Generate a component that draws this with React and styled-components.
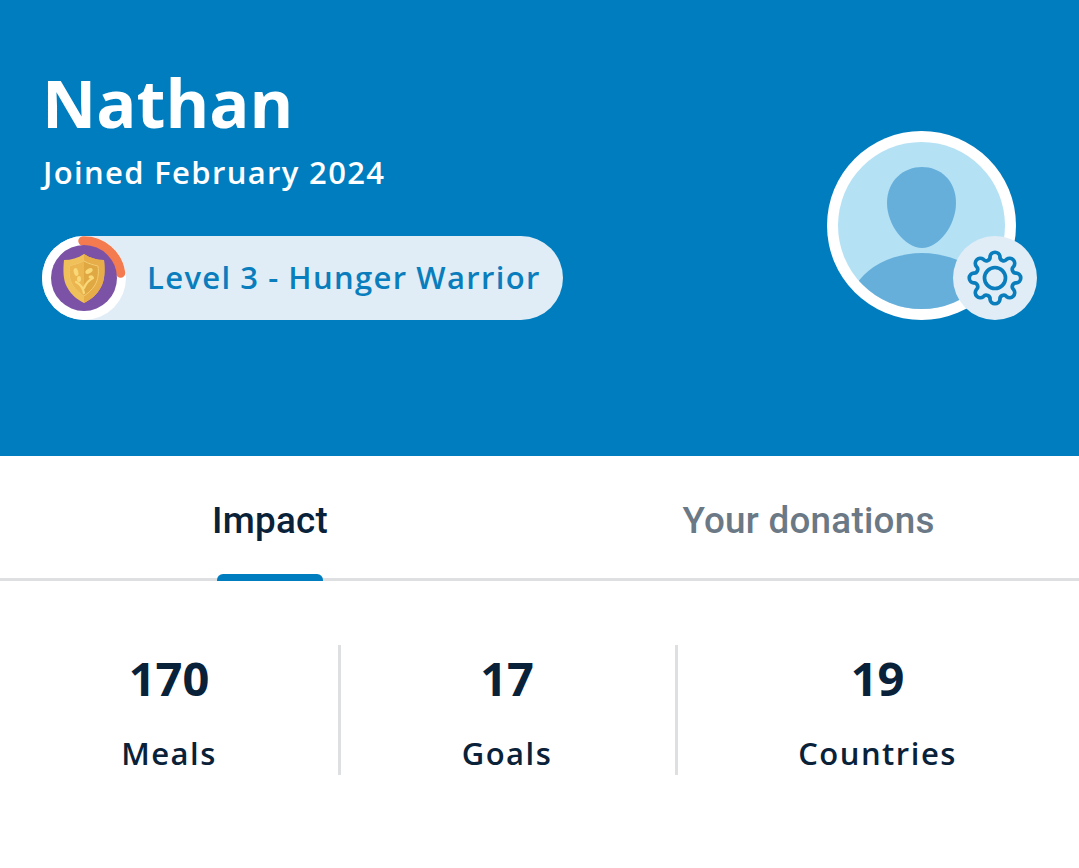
import React from "react";
import styled, { createGlobalStyle } from "styled-components";

const Global = createGlobalStyle`
  html, body { margin: 0; padding: 0; background: #fff; }
  * { box-sizing: border-box; }
`;
const Page = styled.div`
  width: 1079px; height: 868px; overflow: hidden; background: #fff;
  font-family: "Open Sans", sans-serif; color: #0a2239;
`;
const Header = styled.header`
  height: 456px; background: #007dbf; padding: 65px 42px 0 42px;
  display: flex; justify-content: space-between; align-items: flex-start;
`;
const Info = styled.div`display: flex; flex-direction: column; align-items: flex-start;`;
const Name = styled.h1`
  margin: 0; font-size: 66.7px; line-height: 76px; font-weight: 700; color: #fff;
`;
const Joined = styled.div`
  font-size: 31px; line-height: 42px; font-weight: 600; color: #fff; letter-spacing: 1.35px; margin: 10px 0 0 1px;
`;
const Pill = styled.div`
  margin-top: 43px; height: 84px; width: 521px; border-radius: 42px; background: #e0edf6;
  display: flex; align-items: center; gap: 21px;
`;
const Badge = styled.svg`width: 84px; height: 84px; flex: none;`;
const PillText = styled.span`
  font-size: 31px; font-weight: 600; color: #0a7dbd; letter-spacing: 1.35px; word-spacing: -0.6px; white-space: nowrap; margin-bottom: 2px;
`;
const AvatarWrap = styled.div`
  position: relative; width: 189px; height: 189px; margin: 66px 21px 0 0;
`;
const Avatar = styled.svg`width: 189px; height: 189px; display: block;`;
const GearButton = styled.div`
  position: absolute; left: 126px; top: 105px; width: 84px; height: 84px; border-radius: 50%;
  background: #e0edf6; display: flex; align-items: center; justify-content: center; color: #0a7dbd;
`;
const Tabs = styled.nav`
  height: 125px; display: grid; grid-template-columns: 540px 539px; border-bottom: 3px solid #dddfe1;
`;
const Tab = styled.div`
  position: relative; display: flex; justify-content: center; padding: 42px ${(p) => (p.$active ? "0" : "2px")} 0 0;
  font-family: Roboto, sans-serif; font-weight: 500; font-size: 36.8px; line-height: 46px; letter-spacing: 0.25px;
  color: ${(p) => (p.$active ? "#0a2239" : "#6b7885")};
`;
const Indicator = styled.span`
  position: absolute; left: 217px; bottom: -3px; width: 106px; height: 7px;
  border-radius: 6px 6px 0 0; background: #007dbf;
`;
const Stats = styled.section`
  margin-top: 64px; display: grid; grid-template-columns: 338px 337px 404px; height: 130px;
`;
const Stat = styled.div`
  display: flex; flex-direction: column; align-items: center;
  border-left: ${(p) => (p.$divided ? "3px solid #dddfe1" : "none")};
  padding-right: ${(p) => (p.$divided ? "2px" : "0")};
`;
const Num = styled.div`font-size: 47px; line-height: 62px; font-weight: 700; color: #0a2239; margin-top: 2px;`;
const Label = styled.div`font-size: 31px; line-height: 42px; font-weight: 600; color: #0a2239; letter-spacing: 1.5px; margin-top: 23px;`;

const stats = [["170", "Meals"], ["17", "Goals"], ["19", "Countries"]];

const polar = (r, deg) => {
  const t = (deg * Math.PI) / 180;
  return `${(29 + r * Math.cos(t)).toFixed(2)} ${(29 + r * Math.sin(t)).toFixed(2)}`;
};
const gearPath = () => {
  let d = `M${polar(22, -103)} `;
  for (let i = 0; i < 8; i++) {
    const a = i * 45 - 90;
    d += `A5 5 0 0 1 ${polar(22, a + 13)} A3.8 3.8 0 0 0 ${polar(22, a + 32)} `;
  }
  return d + "Z";
};

export default function App() {
  return (
    <Page>
      <Global />
      <Header>
        <Info>
          <Name>Nathan</Name>
          <Joined>Joined February 2024</Joined>
          <Pill>
            <Badge viewBox="0 0 84 84">
              <circle cx="42" cy="42" r="42" fill="#fff" />
              <path d="M41 5 A37 37 0 0 1 78.5 37" fill="none" stroke="#f47b4f" strokeWidth="9.5" strokeLinecap="round" />
              <circle cx="42" cy="42" r="33" fill="#7b52a6" />
              <path d="M42 18 C48 22 55 24 62 24 C63 34 63 44 59 51 C55 59 48 64 42 67 C36 64 29 59 25 51 C21 44 21 34 22 24 C29 24 36 22 42 18Z" fill="#f0c05a" />
              <path d="M42 18 C48 22 55 24 62 24 C63 34 63 44 59 51 C55 59 48 64 42 67Z" fill="#e6ad48" />
              <path d="M42 25 C47 28 52 29 56 30 C57 37 56 44 53 49 C50 54 46 57 42 60 C38 57 34 54 31 49 C28 44 27 37 28 30 C32 29 37 28 42 25Z" fill="#dfa842" stroke="#f4cd74" strokeWidth="1" />
              <path d="M42 25 C37 28 32 29 28 30 C27 37 28 44 31 49 C34 54 38 57 42 60Z" fill="#ebb650" />
              <path d="M42 57 C41 52 38 48 34 46 M42 52 C44 47 47 44 51 42" fill="none" stroke="#f9d877" strokeWidth="2.2" strokeLinecap="round" />
              <ellipse cx="34" cy="36" rx="2.2" ry="4" fill="#f9d877" transform="rotate(-15 34 36)" />
              <ellipse cx="47" cy="35" rx="4" ry="2.2" fill="#f9d877" transform="rotate(-30 47 35)" />
              <ellipse cx="37" cy="43" rx="2" ry="3" fill="#f9d877" />
              <ellipse cx="49" cy="41" rx="2.5" ry="1.8" fill="#f9d877" />
            </Badge>
            <PillText>Level 3 - Hunger Warrior</PillText>
          </Pill>
        </Info>
        <AvatarWrap>
          <Avatar viewBox="0 0 189 189">
            <defs>
              <clipPath id="inner"><circle cx="94.5" cy="94.5" r="83.5" /></clipPath>
            </defs>
            <circle cx="94.5" cy="94.5" r="94.5" fill="#fff" />
            <circle cx="94.5" cy="94.5" r="83.5" fill="#b5e1f5" />
            <g clipPath="url(#inner)" fill="#66afda">
              <path d="M95 36 C113 36 129 49 129 72 C129 94 112 117 95 117 C78 117 60 94 60 72 C60 49 77 36 95 36Z" />
              <ellipse cx="95" cy="182" rx="75" ry="60" />
            </g>
          </Avatar>
          <GearButton>
            <svg width="58" height="58" viewBox="0 0 58 58" fill="none" stroke="currentColor" strokeWidth="3.7" strokeLinejoin="round">
              <path d={gearPath()} />
              <circle cx="29" cy="29" r="10.5" />
            </svg>
          </GearButton>
        </AvatarWrap>
      </Header>
      <Tabs>
        <Tab $active>Impact<Indicator /></Tab>
        <Tab>Your donations</Tab>
      </Tabs>
      <Stats>
        {stats.map(([n, l], i) => (
          <Stat key={l} $divided={i > 0}>
            <Num>{n}</Num>
            <Label>{l}</Label>
          </Stat>
        ))}
      </Stats>
    </Page>
  );
}
